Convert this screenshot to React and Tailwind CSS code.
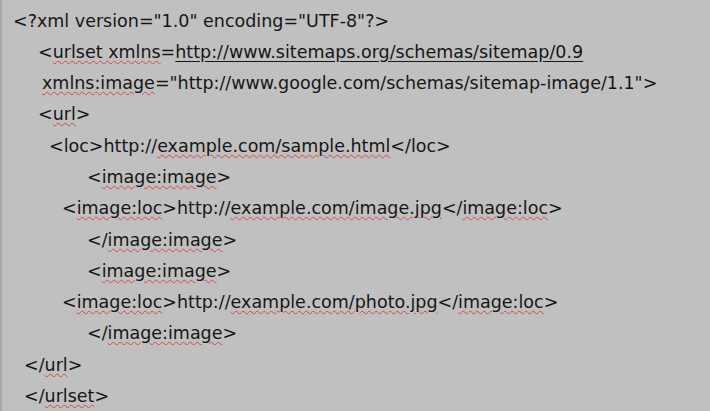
const sq = "underline decoration-wavy decoration-[#d94848] decoration-1 underline-offset-[2px]";

const W = ({ children }) => <span className={sq}>{children}</span>;

const Line = ({ indent, children }) => (
  <div className={`h-[31.3px] flex items-center whitespace-pre ${indent}`}>
    <span>{children}</span>
  </div>
);

export default function App() {
  return (
    <div className="w-[710px] h-[411px] bg-[#c0c0c0] border-l-2 border-[#a8a8a8] text-[#161616] text-[17.5px] overflow-hidden" style={{ fontFamily: "Verdana, 'DejaVu Sans', sans-serif" }}>
      <div className="flex flex-col pt-[5px]">
        <Line indent="pl-[11px]">{'<?xml version="1.0" encoding="UTF-8"?>'}</Line>
        <Line indent="pl-[36px]">
          {'<'}<W>urlset xmlns</W>{'='}<span className="underline underline-offset-[3px]">http://www.sitemaps.org/schemas/sitemap/0.9</span>
        </Line>
        <Line indent="pl-[40px]">
          <W>xmlns:image</W>{'="http://www.google.com/schemas/sitemap-image/1.1">'}
        </Line>
        <Line indent="pl-[36px]">{'<'}<W>url</W>{'>'}</Line>
        <Line indent="pl-[47px]">{'<loc>http://'}<W>example.com/sample.html</W>{'</loc>'}</Line>
        <Line indent="pl-[85px]">{'<'}<W>image:image</W>{'>'}</Line>
        <Line indent="pl-[60px]">{'<'}<W>image:loc</W>{'>http://'}<W>example.com/image.jpg</W>{'</'}<W>image:loc</W>{'>'}</Line>
        <Line indent="pl-[85px]">{'</'}<W>image:image</W>{'>'}</Line>
        <Line indent="pl-[85px]">{'<'}<W>image:image</W>{'>'}</Line>
        <Line indent="pl-[60px]">{'<'}<W>image:loc</W>{'>http://'}<W>example.com/photo.jpg</W>{'</'}<W>image:loc</W>{'>'}</Line>
        <Line indent="pl-[85px]">{'</'}<W>image:image</W>{'>'}</Line>
        <Line indent="pl-[22px]">{'</'}<W>url</W>{'>'}</Line>
        <Line indent="pl-[22px]">{'</'}<W>urlset</W>{'>'}</Line>
      </div>
    </div>
  );
}
